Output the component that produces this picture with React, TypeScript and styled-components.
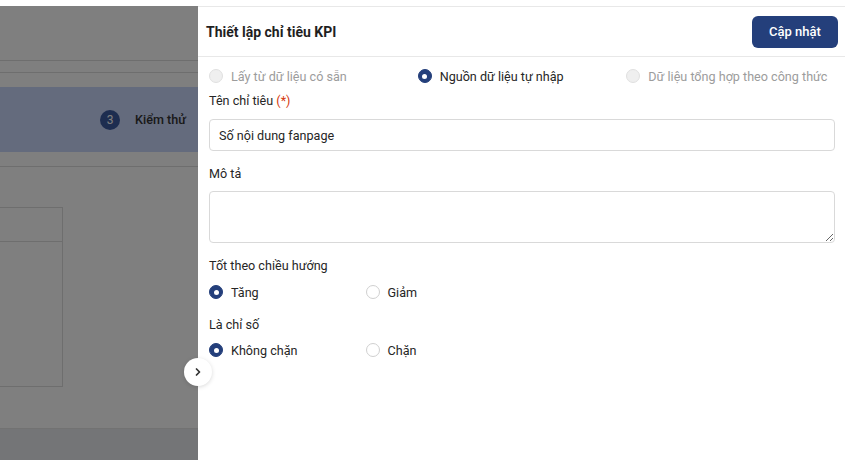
import React from "react";
import styled, { createGlobalStyle } from "styled-components";

const GlobalStyle = createGlobalStyle`
  html, body { margin: 0; padding: 0; }
  body { font-family: Roboto, "Noto Sans", Arial, sans-serif; background: #fff; }
  * { box-sizing: border-box; }
`;

const Page = styled.div`
  position: relative;
  width: 845px;
  height: 460px;
  overflow: hidden;
  background: #fff;
`;

/* ---------- underlying page ---------- */
const Underlay = styled.div`
  display: flex;
  flex-direction: column;
  height: 100%;
`;
const TopStrip = styled.div`
  height: 6px;
  background: #fff;
`;
const AppHeader = styled.div`
  height: 55px;
  border-bottom: 1px solid #dcdcdc;
`;
const SubBar = styled.div`
  height: 12px;
  border-bottom: 1px solid #dcdcdc;
`;
const Spacer = styled.div<{ $h: number }>`
  height: ${(p) => p.$h}px;
  flex-shrink: 0;
`;
const StepBand = styled.div`
  height: 65px;
  background: #c8d6fa;
  display: flex;
  align-items: center;
  padding-left: 100px;
  gap: 15px;
`;
const StepNum = styled.div`
  width: 20px;
  height: 20px;
  border-radius: 50%;
  background: #3a5aa0;
  color: #fff;
  font-size: 12px;
  display: flex;
  align-items: center;
  justify-content: center;
`;
const StepLabel = styled.div`
  font-size: 12.6px;
  font-weight: 500;
  color: #333;
`;
const Divider = styled.div`
  height: 1px;
  background: #dcdcdc;
`;
const TableBox = styled.div`
  margin-left: -10px;
  width: 73px;
  height: 180px;
  border: 1px solid #dcdcdc;
  display: flex;
  flex-direction: column;
`;
const TableHead = styled.div`
  height: 34px;
  border-bottom: 1px solid #dcdcdc;
`;
const Footer = styled.div`
  margin-top: auto;
  height: 32px;
  background: #e8eaee;
  border-top: 1px solid #e4e4e4;
`;

const Mask = styled.div`
  position: absolute;
  top: 6px;
  left: 0;
  right: 0;
  bottom: 0;
  background: rgba(0, 0, 0, 0.5);
`;

/* ---------- drawer ---------- */
const Drawer = styled.aside`
  position: absolute;
  top: 6px;
  right: 0;
  bottom: 0;
  width: 647px;
  background: #fff;
  border-top: 1px solid #e8e8e8;
  display: flex;
  flex-direction: column;
`;
const DrawerHeader = styled.div`
  height: 50px;
  padding: 0 7px 0 8px;
  display: flex;
  align-items: center;
  justify-content: space-between;
  border-bottom: 1px solid #e8e8e8;
`;
const Title = styled.div`
  font-size: 14px;
  font-weight: 700;
  color: #1f1f1f;
`;
const PrimaryButton = styled.button`
  height: 32px;
  width: 86px;
  border: none;
  border-radius: 6px;
  background: #243f7b;
  color: #fff;
  font-family: inherit;
  font-size: 13px;
  font-weight: 500;
  cursor: pointer;
`;
const Body = styled.div`
  padding: 9px 10px 0 11px;
  display: flex;
  flex-direction: column;
`;
const RadioGrid = styled.div<{ $cols: number; $mb: number }>`
  display: grid;
  grid-template-columns: repeat(${(p) => p.$cols}, 1fr);
  height: 20px;
  align-items: center;
  margin-bottom: ${(p) => p.$mb}px;
`;
const RadioItem = styled.label<{ $disabled?: boolean }>`
  display: flex;
  align-items: center;
  gap: 8px;
  font-size: 12.6px;
  color: ${(p) => (p.$disabled ? "#9c9c9c" : "#262626")};
`;
const RadioDot = styled.span<{ $checked?: boolean; $disabled?: boolean }>`
  width: 14px;
  height: 14px;
  border-radius: 50%;
  flex-shrink: 0;
  position: relative;
  background: ${(p) => (p.$checked ? "#243f7b" : p.$disabled ? "#efefef" : "#fff")};
  border: 1px solid ${(p) => (p.$checked ? "#243f7b" : p.$disabled ? "#e0e0e0" : "#d0d0d0")};
  &::after {
    content: "";
    display: ${(p) => (p.$checked ? "block" : "none")};
    position: absolute;
    left: 50%;
    top: 50%;
    width: 5px;
    height: 5px;
    margin: -2.5px 0 0 -2.5px;
    border-radius: 50%;
    background: #fff;
  }
`;
const Label = styled.div<{ $mb?: number }>`
  font-size: 12.6px;
  line-height: 18px;
  color: #262626;
  margin-bottom: ${(p) => p.$mb ?? 9}px;
`;
const Req = styled.span`
  color: #d4380d;
`;
const TextInput = styled.input`
  height: 32px;
  width: 100%;
  border: 1px solid #d9d9d9;
  border-radius: 4px;
  padding: 0 9px;
  font-family: inherit;
  font-size: 12.6px;
  color: #262626;
  margin-bottom: 14px;
  outline: none;
`;
const TextArea = styled.textarea`
  height: 52px;
  width: 100%;
  border: 1px solid #d9d9d9;
  border-radius: 4px;
  padding: 6px 9px;
  font-family: inherit;
  font-size: 12.6px;
  margin: 0 0 14px;
  display: block;
  outline: none;
`;

const CollapseButton = styled.button`
  position: absolute;
  left: 184px;
  top: 358px;
  width: 28px;
  height: 28px;
  border-radius: 50%;
  border: none;
  background: #fff;
  box-shadow: 0 1px 4px rgba(0, 0, 0, 0.15);
  display: flex;
  align-items: center;
  justify-content: center;
  padding: 0;
  cursor: pointer;
`;

const Radio = ({
  label,
  checked,
  disabled,
}: {
  label: string;
  checked?: boolean;
  disabled?: boolean;
}) => (
  <RadioItem $disabled={disabled}>
    <RadioDot $checked={checked} $disabled={disabled} />
    {label}
  </RadioItem>
);

export default function App() {
  return (
    <>
      <GlobalStyle />
      <Page>
        <Underlay>
          <TopStrip />
          <AppHeader />
          <SubBar />
          <Spacer $h={14} />
          <StepBand>
            <StepNum>3</StepNum>
            <StepLabel>Kiểm thử</StepLabel>
          </StepBand>
          <Spacer $h={14} />
          <Divider />
          <Spacer $h={40} />
          <TableBox>
            <TableHead />
          </TableBox>
          <Footer />
        </Underlay>
        <Mask />
        <Drawer>
          <DrawerHeader>
            <Title>Thiết lập chỉ tiêu KPI</Title>
            <PrimaryButton>Cập nhật</PrimaryButton>
          </DrawerHeader>
          <Body>
            <RadioGrid $cols={3} $mb={6}>
              <Radio label="Lấy từ dữ liệu có sẵn" disabled />
              <Radio label="Nguồn dữ liệu tự nhập" checked />
              <Radio label="Dữ liệu tổng hợp theo công thức" disabled />
            </RadioGrid>
            <Label>
              Tên chỉ tiêu <Req>(*)</Req>
            </Label>
            <TextInput defaultValue="Số nội dung fanpage" />
            <Label $mb={8}>Mô tả</Label>
            <TextArea />
            <Label $mb={7}>Tốt theo chiều hướng</Label>
            <RadioGrid $cols={4} $mb={14}>
              <Radio label="Tăng" checked />
              <Radio label="Giảm" />
            </RadioGrid>
            <Label $mb={6}>Là chỉ số</Label>
            <RadioGrid $cols={4} $mb={0}>
              <Radio label="Không chặn" checked />
              <Radio label="Chặn" />
            </RadioGrid>
          </Body>
        </Drawer>
        <CollapseButton aria-label="Mở rộng">
          <svg width="12" height="12" viewBox="0 0 24 24" fill="none" stroke="#333" strokeWidth="3.5" strokeLinecap="round" strokeLinejoin="round">
            <path d="M9 6l6 6-6 6" />
          </svg>
        </CollapseButton>
      </Page>
    </>
  );
}
